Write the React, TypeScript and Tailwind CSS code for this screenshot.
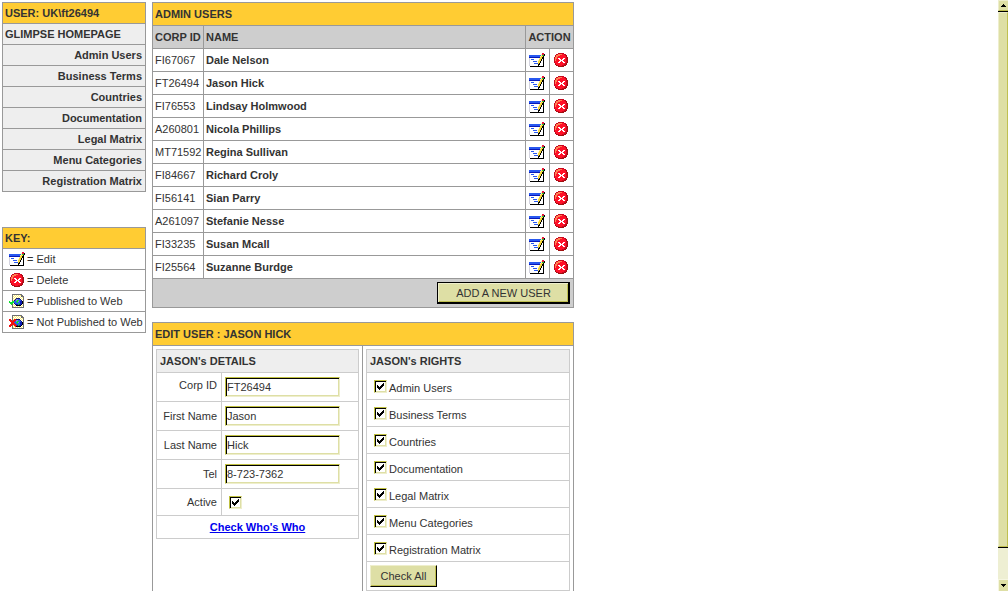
import { useState } from "react";

const palette: Record<string, string> = {
  R: "#e8183c",
  K: "#000000",
  G: "#18c030",
  B: "#2858f0",
  b: "#0818b8",
  W: "#ffffff",
  g: "#d4d4e0",
  Y: "#f8d838",
  y: "#fff0a0",
  o: "#fff27a",
  n: "#101870",
  c: "#7888e8",
  L: "#10e030",
  D: "#707070",
  X: "#f01010",
  x: "#a01010",
  O: "#ff8050",
  r: "#ff1028",
  m: "#c80820",
};

const editRows = [
  ".............RR.",
  "............yRRK",
  "BBBBBBBBBBBByGGK",
  "BBBBBBBBBBByYYK.",
  "bbbbbbbbbbbYYKK.",
  "gWWWWWWWWWyYYKK.",
  "gWBBBWWWWWYYKWK.",
  "gWWWWWWWWyYYKWK.",
  "gWWWBBBBWYYKWWK.",
  "gWWWWWWWWYYKWWK.",
  "gWWWWBBBBYKWWWK.",
  "gWWWWWWWWKKWWWK.",
  "gWWWWWWWWKWWWWK.",
  ".KKKKKKKKKKKKKK.",
];

const deleteRows = [
  "....mmmmmm....",
  "..mmOOOOrrmm..",
  ".mOOOOrrrrrmx.",
  ".mOOrrrrrrrrx.",
  "mOOrrrrrrrrrmx",
  "mOOrWWrrrWWrmx",
  "mOrrrWWrWWrrmx",
  "mOrrrrWWWrrrmx",
  "mrrrrWWrWWrrmx",
  "mrrrWWrrrWWrmx",
  ".mrrrrrrrrrmx.",
  ".xrrrrrrrrmmx.",
  "..xmmrrrmmxx..",
  "....xxxxxx....",
];

const publishedRows = [
  "...DDDDDDDDDD...",
  "...DWoWoWoWoDD..",
  "...DoWoWoWoWDDD.",
  "...DWoWoWoWoWoD.",
  "...DoWonnnnWoWD.",
  "...DWonccBBnWoD.",
  "...DonBcLLBBnWD.",
  "L..LLBBLLcBbbKD.",
  "LLLLLBBBLBBbbKD.",
  ".LLLWnBBBBLbbKD.",
  "..LDoWnbbLbbKWD.",
  "...DWoWKKKKKWoD.",
  "...DoWoWoWoWoWD.",
  "...DDDDDDDDDDDD.",
];

const unpublishedRows = [
  "...DDDDDDDDDD...",
  "...DWoWoWoWoDD..",
  "...DoWoWoWoWDDD.",
  "...DWoWoWoWoWoD.",
  "XX.DoXXnnnnWoWD.",
  "XXXDXXXccBBnWoD.",
  ".XXXXXBcLLBBnWD.",
  "..XXXBBLLcBbbKD.",
  "..XXXXBBLBBbbKD.",
  ".XXXXXXBBBLbbKD.",
  "XXXDoXXXbLbbKWD.",
  "XX.DWoXKKKKKWoD.",
  "...DoWoWoWoWoWD.",
  "...DDDDDDDDDDDD.",
];

function PixelIcon({ rows, label }: { rows: string[]; label: string }) {
  const w = rows[0].length;
  return (
    <svg
      role="img"
      aria-label={label}
      width={w}
      height={rows.length}
      viewBox={`0 0 ${w} ${rows.length}`}
      shapeRendering="crispEdges"
      className="block shrink-0"
    >
      {rows.flatMap((row, y) =>
        row
          .split("")
          .map((c, x) =>
            c === "." ? null : (
              <rect key={`${x}-${y}`} x={x} y={y} width="1" height="1" fill={palette[c]} />
            ),
          ),
      )}
    </svg>
  );
}

const sections = [
  "Admin Users",
  "Business Terms",
  "Countries",
  "Documentation",
  "Legal Matrix",
  "Menu Categories",
  "Registration Matrix",
];

const users = [
  ["FI67067", "Dale Nelson"],
  ["FT26494", "Jason Hick"],
  ["FI76553", "Lindsay Holmwood"],
  ["A260801", "Nicola Phillips"],
  ["MT71592", "Regina Sullivan"],
  ["FI84667", "Richard Croly"],
  ["FI56141", "Sian Parry"],
  ["A261097", "Stefanie Nesse"],
  ["FI33235", "Susan Mcall"],
  ["FI25564", "Suzanne Burdge"],
];

const legend = [
  { rows: editRows, text: "Edit" },
  { rows: deleteRows, text: "Delete" },
  { rows: publishedRows, text: "Published to Web" },
  { rows: unpublishedRows, text: "Not Published to Web" },
];

const fields = [
  { id: "corp", label: "Corp ID", value: "FT26494", cell: "pb-1" },
  { id: "first", label: "First Name", value: "Jason", cell: "" },
  { id: "last", label: "Last Name", value: "Hick", cell: "" },
  { id: "tel", label: "Tel", value: "8-723-7362", cell: "" },
];

function CheckBox({
  id,
  checked,
  onChange,
}: {
  id: string;
  checked: boolean;
  onChange: (v: boolean) => void;
}) {
  return (
    <span className="inline-grid size-[13px] shrink-0">
      <input
        id={id}
        type="checkbox"
        checked={checked}
        onChange={(e) => onChange(e.target.checked)}
        className="col-start-1 row-start-1 size-[13px] appearance-none border border-t-[#c0c040] border-l-[#c0c040] border-r-[#eeeecc] border-b-[#eeeecc] bg-white shadow-[inset_1px_1px_0_#000,inset_-1px_-1px_0_#dedfa5]"
      />
      {checked && (
        <svg
          viewBox="0 0 13 13"
          shapeRendering="crispEdges"
          className="pointer-events-none col-start-1 row-start-1 size-[13px]"
        >
          <path
            d="M3 5h1v3h-1zM4 6h1v3h-1zM5 7h1v3h-1zM6 6h1v3h-1zM7 5h1v3h-1zM8 4h1v3h-1zM9 3h1v3h-1z"
            fill="#000"
          />
        </svg>
      )}
    </span>
  );
}

const grid = "border-separate border-spacing-px bg-[#999999]";
const innerGrid = "w-full border-separate border-spacing-px bg-[#cccccc]";
const bevel =
  "border-t-[#eeeecc] border-l-[#eeeecc] shadow-[inset_-1px_-1px_0_#c0c050] bg-[#dedfa5]";

export default function App() {
  const [rights, setRights] = useState<boolean[]>(sections.map(() => true));
  const [active, setActive] = useState(true);
  const [values, setValues] = useState(fields.map((f) => f.value));

  return (
    <div className="flex h-screen overflow-hidden bg-white font-['Liberation_Sans',Arial,sans-serif] text-[11px] leading-[14px] text-[#333333]">
      <div className="flex min-w-0 flex-1 items-start gap-1.5 overflow-hidden pt-0.5 pl-0.5">
        <aside className="flex w-36 shrink-0 flex-col gap-[35px]">
          <nav className="flex flex-col gap-px bg-[#999999] p-px font-bold">
            <div className="flex h-5 items-center bg-[#ffcc33] px-0.5">USER: UK\ft26494</div>
            <a href="#home" className="flex h-5 items-center bg-[#eeeeee] px-0.5">
              GLIMPSE HOMEPAGE
            </a>
            {sections.map((s) => (
              <a
                key={s}
                href="#section"
                className="flex h-5 items-center justify-end bg-[#eeeeee] px-[3px]"
              >
                {s}
              </a>
            ))}
          </nav>
          <section className="flex flex-col gap-px bg-[#999999] p-px">
            <h2 className="flex h-5 items-center bg-[#ffcc33] px-0.5 font-bold">KEY:</h2>
            {legend.map((l) => (
              <div key={l.text} className="flex h-5 items-center gap-0.5 bg-white pl-1.5">
                <span className="flex w-4 justify-center">
                  <PixelIcon rows={l.rows} label="" />
                </span>
                <span className="whitespace-nowrap">= {l.text}</span>
              </div>
            ))}
          </section>
        </aside>

        <main className="flex w-[422px] shrink-0 flex-col gap-3.5">
          <table className={`w-full table-fixed ${grid}`}>
            <colgroup>
              <col className="w-[50px]" />
              <col />
              <col className="w-[23px]" />
              <col className="w-[23px]" />
            </colgroup>
            <thead>
              <tr>
                <th colSpan={4} className="h-[22px] bg-[#ffcc33] px-0.5 text-left">
                  ADMIN USERS
                </th>
              </tr>
              <tr className="text-left whitespace-nowrap">
                <th className="h-[22px] bg-[#cecece] pl-0.5">CORP ID</th>
                <th className="h-[22px] bg-[#cecece] pl-0.5">NAME</th>
                <th colSpan={2} className="h-[22px] bg-[#cecece] text-center">
                  ACTION
                </th>
              </tr>
            </thead>
            <tbody>
              {users.map(([id, name]) => (
                <tr key={id} className="bg-white">
                  <td className="h-[22px] pl-0.5">{id}</td>
                  <td className="h-[22px] pl-0.5 font-bold">{name}</td>
                  <td className="h-[22px]">
                    <button className="ml-[3px] block">
                      <PixelIcon rows={editRows} label={`Edit ${name}`} />
                    </button>
                  </td>
                  <td className="h-[22px]">
                    <button className="mx-auto block">
                      <PixelIcon rows={deleteRows} label={`Delete ${name}`} />
                    </button>
                  </td>
                </tr>
              ))}
              <tr>
                <td colSpan={4} className="h-7 bg-[#cecece] pr-[3px]">
                  <div className="ml-auto h-[22px] w-[133px] border border-r-2 border-b-2 border-black">
                    <button className={`block size-full border-t border-l ${bevel}`}>
                      ADD A NEW USER
                    </button>
                  </div>
                </td>
              </tr>
            </tbody>
          </table>

          <section className="flex flex-col gap-px bg-[#999999] p-px">
            <h2 className="flex h-[22px] items-center bg-[#ffcc33] px-0.5 font-bold">
              EDIT USER : JASON HICK
            </h2>
            <div className="flex gap-px">
              <div className="w-[209px] bg-white p-[3px]">
                <table className={innerGrid}>
                  <thead>
                    <tr>
                      <th colSpan={2} className="h-[22px] bg-[#eeeeee] px-[3px] text-left">
                        JASON's DETAILS
                      </th>
                    </tr>
                  </thead>
                  <tbody>
                    {fields.map((f, i) => (
                      <tr key={f.id} className="bg-white">
                        <td className={`h-7 w-16 pr-1 text-right whitespace-nowrap ${f.cell}`}>
                          <label htmlFor={f.id}>{f.label}</label>
                        </td>
                        <td className="h-7 pl-[3px]">
                          <input
                            id={f.id}
                            type="text"
                            value={values[i]}
                            onChange={(e) =>
                              setValues(values.map((v, j) => (j === i ? e.target.value : v)))
                            }
                            className="block h-5 w-[115px] border border-t-[#c0c040] border-l-[#c0c040] border-r-[#eeeecc] border-b-[#eeeecc] bg-white px-px shadow-[inset_1px_1px_0_#000,inset_-1px_-1px_0_#dedfa5] outline-none"
                          />
                        </td>
                      </tr>
                    ))}
                    <tr className="bg-white">
                      <td className="h-[26px] pr-1 text-right">
                        <label htmlFor="active">Active</label>
                      </td>
                      <td className="h-[26px] pl-[7px]">
                        <div className="flex">
                          <CheckBox id="active" checked={active} onChange={setActive} />
                        </div>
                      </td>
                    </tr>
                    <tr className="bg-white">
                      <td colSpan={2} className="h-[22px] text-center">
                        <a href="#whos-who" className="font-bold text-[#0000ee] underline">
                          Check Who's Who
                        </a>
                      </td>
                    </tr>
                  </tbody>
                </table>
              </div>
              <div className="flex-1 bg-white p-[3px]">
                <div className="flex flex-col gap-px bg-[#cccccc] p-px">
                  <h3 className="flex h-[22px] items-center bg-[#eeeeee] px-[3px] font-bold">
                    JASON's RIGHTS
                  </h3>
                  {sections.map((s, i) => (
                    <div key={s} className="flex h-[26px] items-center gap-0.5 bg-white pl-[7px]">
                      <CheckBox
                        id={`right-${i}`}
                        checked={rights[i]}
                        onChange={(v) => setRights(rights.map((r, j) => (j === i ? v : r)))}
                      />
                      <label htmlFor={`right-${i}`} className="pt-1">
                        {s}
                      </label>
                    </div>
                  ))}
                  <div className="flex h-7 items-center bg-white pl-[3px]">
                    <button
                      onClick={() => setRights(sections.map(() => true))}
                      className={`h-[22px] w-[67px] border border-r-black border-b-black ${bevel}`}
                    >
                      Check All
                    </button>
                  </div>
                </div>
              </div>
            </div>
          </section>
        </main>
      </div>

      <div aria-hidden="true" className="flex w-2.5 shrink-0 flex-col bg-[#eeefd3]">
        <div className="flex h-[11px] items-center justify-center border-t border-b border-l border-t-[#eeeecc] border-b-[#c0c050] border-l-[#eeeecc] bg-[#dedfa5]">
          <svg width="5" height="3" viewBox="0 0 5 3" shapeRendering="crispEdges">
            <path d="M2 0h1v1h1v1h1v1h-5v-1h1v-1h1z" fill="#000" />
          </svg>
        </div>
        <div className="h-px bg-black" />
        <div className="grow-[17] border border-t-[#eeeecc] border-r-[#c0c050] border-b-[#c0c050] border-l-[#eeeecc] bg-[#dedfa5]" />
        <div className="h-px bg-black" />
        <div className="grow" />
        <div className="flex h-3 items-center justify-center border-t border-l border-[#f6f6e0] bg-[#dedfa5]">
          <svg width="5" height="3" viewBox="0 0 5 3" shapeRendering="crispEdges">
            <path d="M0 0h5v1h-1v1h-1v1h-1v-1h-1v-1h-1z" fill="#000" />
          </svg>
        </div>
      </div>
    </div>
  );
}
